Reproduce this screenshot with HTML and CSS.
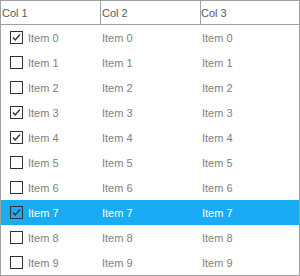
FILE: index.html
```html
<!DOCTYPE html>
<html lang="en">
<head>
<meta charset="UTF-8">
<title>List View</title>
<link rel="stylesheet" href="styles.css">
</head>
<body>

<div class="grid">
  <div class="head">
    <div class="hcell">Col 1</div>
    <div class="hcell">Col 2</div>
    <div class="hcell last">Col 3</div>
  </div>

  <div class="row"><div class="cell first"><span class="box on"><svg viewBox="0 0 11 11"><polyline points="2,5.5 4.2,8 9,2.5"/></svg></span>Item 0</div><div class="cell">Item 0</div><div class="cell">Item 0</div></div>
  <div class="row"><div class="cell first"><span class="box"></span>Item 1</div><div class="cell">Item 1</div><div class="cell">Item 1</div></div>
  <div class="row"><div class="cell first"><span class="box"></span>Item 2</div><div class="cell">Item 2</div><div class="cell">Item 2</div></div>
  <div class="row"><div class="cell first"><span class="box on"><svg viewBox="0 0 11 11"><polyline points="2,5.5 4.2,8 9,2.5"/></svg></span>Item 3</div><div class="cell">Item 3</div><div class="cell">Item 3</div></div>
  <div class="row"><div class="cell first"><span class="box on"><svg viewBox="0 0 11 11"><polyline points="2,5.5 4.2,8 9,2.5"/></svg></span>Item 4</div><div class="cell">Item 4</div><div class="cell">Item 4</div></div>
  <div class="row"><div class="cell first"><span class="box"></span>Item 5</div><div class="cell">Item 5</div><div class="cell">Item 5</div></div>
  <div class="row"><div class="cell first"><span class="box"></span>Item 6</div><div class="cell">Item 6</div><div class="cell">Item 6</div></div>
  <div class="row selected"><div class="cell first"><span class="box on"><svg viewBox="0 0 11 11"><polyline points="2,5.5 4.2,8 9,2.5"/></svg></span>Item 7</div><div class="cell">Item 7</div><div class="cell">Item 7</div></div>
  <div class="row"><div class="cell first"><span class="box"></span>Item 8</div><div class="cell">Item 8</div><div class="cell">Item 8</div></div>
  <div class="row"><div class="cell first"><span class="box"></span>Item 9</div><div class="cell">Item 9</div><div class="cell">Item 9</div></div>
</div>

</body>
</html>
```

FILE: styles.css
```css
* {
  box-sizing: border-box;
}
body {
  margin: 0;
  font-family: "Liberation Sans", Arial, sans-serif;
  font-size: 11px;
  background: #fff;
}
.grid {
  width: 300px;
  height: 276px;
  border: 1px solid #a0a0a0;
  overflow: hidden;
  background: #fff;
}
.head {
  display: grid;
  grid-template-columns: 100px 100px 1fr;
  height: 24px;
  border-bottom: 1px solid #a0a0a0;
}
.hcell {
  display: flex;
  align-items: center;
  padding-left: 1px;
  color: #5a5a5a;
  border-right: 1px solid #a0a0a0;
}
.hcell.last {
  border-right: none;
  padding-left: 0;
}
.row {
  display: grid;
  grid-template-columns: 100px 100px 1fr;
  height: 25px;
  color: #7f7f7f;
}
.row.selected {
  background: #1aabf5;
  color: #fff;
}
.cell {
  display: flex;
  align-items: center;
  padding-left: 1px;
}
.cell.first {
  padding-left: 9px;
}
.box {
  width: 13px;
  height: 13px;
  border: 1px solid #333;
  margin-right: 5px;
  margin-top: -1px;
  display: flex;
}
.box svg {
  width: 11px;
  height: 11px;
  fill: none;
  stroke: #333;
  stroke-width: 1.4;
}
```
